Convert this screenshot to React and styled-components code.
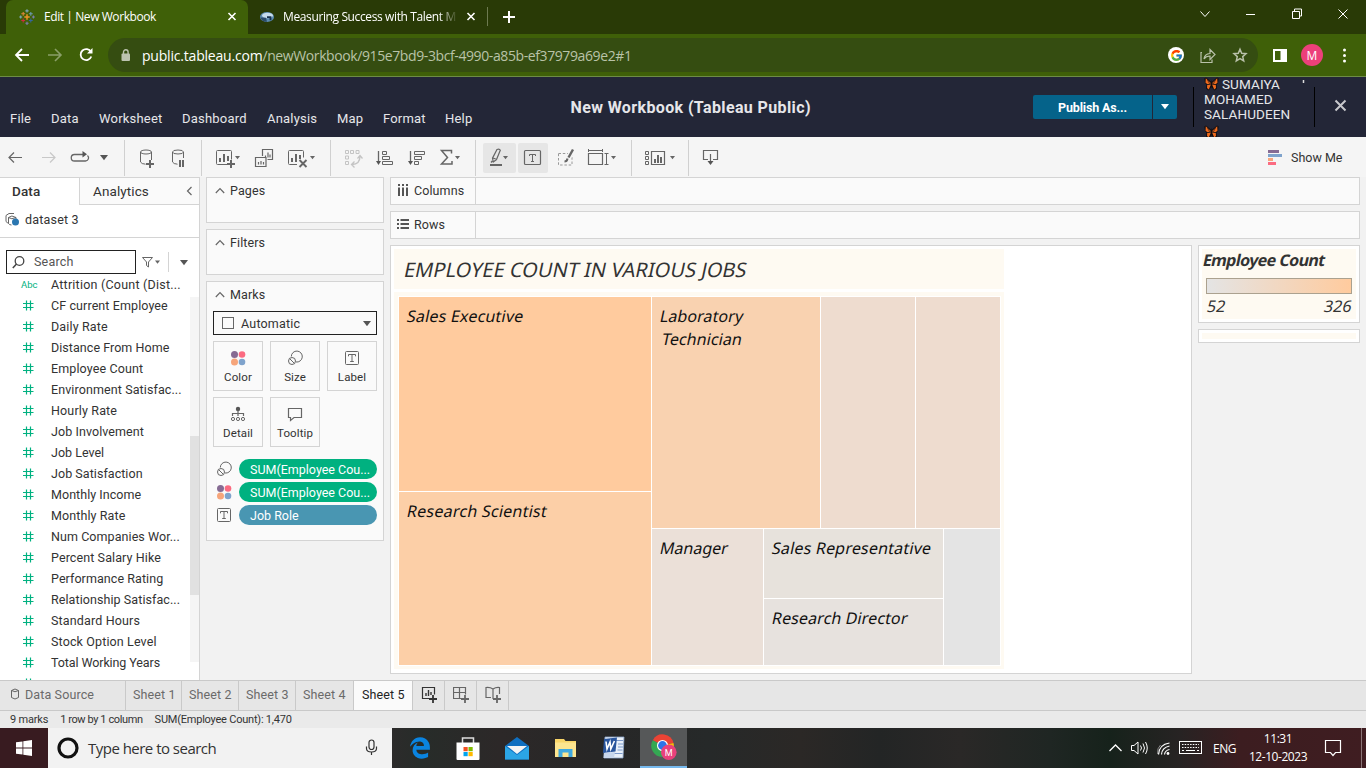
import React from "react";
import styled, { createGlobalStyle } from "styled-components";
import { FcGoogle } from "react-icons/fc";
import { FaEdgeLegacy } from "react-icons/fa";

const Global = createGlobalStyle`
  * { box-sizing: border-box; }
  html, body, #root { margin: 0; width: 1366px; height: 768px; overflow: hidden; }
  body { font-family: Roboto, "Liberation Sans", sans-serif; color: #333; }
  svg { display: block; flex: none; }
`;

const segoe = `"Open Sans", "Noto Sans", sans-serif`;
const chartFont = `"Noto Sans", "Open Sans", sans-serif`;

const Screen = styled.div`
  width: 1366px; height: 768px; display: flex; flex-direction: column; overflow: hidden;
`;
const Txt = styled.span`
  white-space: pre; flex: none;
  margin-left: ${(p) => p.$ml || 0}px;
  font-family: ${(p) => p.$font || "inherit"};
  font-size: ${(p) => p.$size || 12.5}px;
  font-weight: ${(p) => p.$weight || 400};
  letter-spacing: ${(p) => p.$ls || 0}px;
  color: ${(p) => p.$color || "inherit"};
  line-height: ${(p) => p.$lh || "normal"};
`;
/* Slanted text that keeps the upright letter forms. */
const Oblique = styled.span`
  display: block; width: max-content; transform: skewX(-12deg); transform-origin: 0 75%;
  margin-left: ${(p) => p.$ml || 0}px;
`;

/* Glyph: x and y are the icon's origin, w and h its size (1 unit = 1px). */
const Glyph = ({ x, y, w, h, c = "#666", sw = 1, children }) => (
  <svg width={w} height={h} viewBox={`${x} ${y} ${w} ${h}`} fill="none" stroke={c} strokeWidth={sw}>{children}</svg>
);
const Caret = ({ x, y, s = 5, c = "#666" }) => (
  <path d={`M${x} ${y}h${s}l${-s / 2} ${s * 0.65}z`} fill={c} stroke="none" />
);

/* ---------- browser ---------- */
const TabStrip = styled.div`
  height: 34px; background: #293a06; display: flex; color: #fff; flex: none; padding-left: 6px;
`;
const BrowserTab = styled.div`
  width: ${(p) => p.$w}px; height: 34px; display: flex; align-items: center; padding-left: ${(p) => p.$pl}px;
  background: ${(p) => (p.$active ? "#3f6008" : "transparent")};
  border-radius: ${(p) => (p.$active ? "7px 7px 0 0" : "0")};
`;
const TabTitle = styled.span`
  width: ${(p) => p.$w}px; margin-left: ${(p) => p.$ml}px; overflow: hidden; white-space: nowrap; padding-bottom: 2px;
  font: 12px ${segoe}; letter-spacing: ${(p) => p.$ls}px;
  ${(p) => p.$fade && "mask-image: linear-gradient(90deg, #000 90%, rgba(0,0,0,.1) 100%);"}
`;
const WindowButtons = styled.div`margin-left: auto;`;
const AddressRow = styled.div`
  height: 43px; background: #3f6008; border-bottom: 1px solid #6d8c45; display: flex; flex: none; padding-top: 4px;
`;
const Omnibox = styled.div`
  width: 1150px; height: 34px; border-radius: 17px; background: #354d11; display: flex; align-items: center; padding-left: 13px;
`;
const OmniActions = styled.div`
  margin-left: auto; display: flex; align-items: center; padding-right: 10px;
`;
const GoogleDisc = styled.span`
  width: 16px; height: 16px; border-radius: 50%; background: #fff; display: flex; align-items: center; justify-content: center; margin-right: 13px;
`;
const Avatar = styled.span`
  width: 22px; height: 22px; border-radius: 50%; background: #ec407a; color: #fff; display: flex;
  align-items: center; justify-content: center; font: 12px ${segoe}; margin: 6px 0 0 13px;
`;

/* ---------- header ---------- */
const Header = styled.header`
  height: 60px; background: #232637; color: #e6e6ea; display: flex; flex: none;
`;
const Menu = styled.nav`
  width: 570px; display: flex; padding: 33px 0 0 10px; font-size: 13px;
`;
const MenuItem = styled.span`
  width: ${(p) => p.$w}px; flex: none; letter-spacing: 0.2px; line-height: 17px;
`;
const DocTitle = styled.div`
  width: 463px; padding: 21px 0 0 0.5px; line-height: 20px; font-size: 16px; font-weight: 700; letter-spacing: 0.38px; white-space: pre;
`;
const Publish = styled.div`
  display: flex; gap: 1px; margin-top: 18px; height: 24px;
`;
const PublishPart = styled.div`
  width: ${(p) => p.$w}px; background: #05638a; color: #fff; font-weight: 700; font-size: 12.5px; letter-spacing: -0.15px;
  display: flex; align-items: center; justify-content: center;
  border-radius: ${(p) => (p.$last ? "0 2px 2px 0" : "2px 0 0 2px")};
`;
const Rule = styled.i`
  width: 1px; height: 40px; background: #000; margin-top: 10px; margin-left: ${(p) => p.$ml || 0}px; flex: none;
`;
const UserName = styled.div`
  width: 110px; height: 60px; overflow: hidden; margin-left: 10px; font-size: 13.5px; line-height: 15px;
`;
const NameLine = styled.div`
  display: flex; gap: 3px; height: 15px; white-space: pre; letter-spacing: 0.1px; margin-top: ${(p) => p.$mt || 0}px;
`;
const Grow = styled.span`flex: 1;`;

/* ---------- toolbar ---------- */
const Toolbar = styled.div`
  height: 41px; background: #f5f5f5; border-bottom: 1px solid #d4d4d4; display: flex; flex: none; align-items: flex-start;
`;
const Sep = styled.i`width: 1px; height: 36px; margin-top: 3px; background: #d0d0d0; flex: none;`;
const Pressed = styled.span`
  background: #e6e6e6; border-radius: 2px; height: 30px; margin: 6px ${(p) => p.$mr}px 0 0; flex: none;
`;
const ShowMe = styled.div`margin-left: auto; width: 98px; height: 40px; display: flex; align-items: center; gap: 9px;`;

/* ---------- workspace ---------- */
const Workspace = styled.main`
  background: #f2f2f2; display: flex; flex: none; margin-top: -1px; height: 503px;
`;
const DataPane = styled.aside`
  width: 200px; background: #fff; border-right: 1px solid #d4d4d4; border-top: 1px solid #d4d4d4; display: flex; flex-direction: column; overflow: hidden; flex: none;
`;
const PaneTabs = styled.div`display: flex; height: 27px; flex: none;`;
const PaneTab = styled.div`
  flex: ${(p) => (p.$active ? "0 0 79px" : "1")}; padding: 0 0 1px 12px; font-size: 13.5px; display: flex; align-items: center;
  letter-spacing: 0.1px; font-weight: ${(p) => (p.$active ? 500 : 400)};
  ${(p) => !p.$active && "background:#fafafa; border-left:1px solid #d4d4d4; border-bottom:1px solid #d4d4d4; justify-content: space-between; padding: 0 1px 0 13px;"}
`;
const Dataset = styled.div`
  height: 33px; border-bottom: 1px solid #d4d4d4; display: flex; align-items: center; flex: none; padding: 0 0 4px 5px; gap: 6px;
`;
const SearchRow = styled.div`height: 36px; display: flex; padding: 12px 0 0 6px; flex: none;`;
const SearchBox = styled.div`
  width: 130px; height: 24px; border: 1px solid #222; display: flex; align-items: center; gap: 9px; padding: 0 0 1px 5px;
`;
const FieldArea = styled.div`display: flex; flex: 1; min-height: 0;`;
const FieldList = styled.div`width: 190px; overflow: hidden;`;
const Field = styled.div`
  height: 21px; display: flex; align-items: center; font-size: 12.5px; padding-left: 21px;
`;
const FieldIcon = styled.span`width: 30px; color: #00b180; font-size: 9.5px; line-height: 20px;`;
const ScrollTrack = styled.div`width: 9px; height: 365px; margin-top: 23px; background: #f5f5f5; padding-top: 139px;`;
const ScrollThumb = styled.div`height: 159px; background: #e1e1e1;`;

const Shelves = styled.section`width: 178px; margin-left: 6px; display: flex; flex-direction: column; gap: 6px; flex: none;`;
const Card = styled.div`
  height: ${(p) => p.$h}px; border: 1px solid #d4d4d4; background: #fafafa; flex: none;
`;
const CardTitle = styled.div`
  display: flex; align-items: center; gap: 5px; height: 26px; padding: 0 0 2px 8px; font-size: 12.5px; letter-spacing: 0.1px;
`;
const MarkType = styled.div`
  width: 164px; height: 24px; margin: 3px 0 6px 6px; border: 1px solid #222; display: flex; align-items: center; padding-left: 8px; gap: 7px;
`;
const MarkGrid = styled.div`
  display: grid; grid-template-columns: repeat(3, 50px); gap: 6px 7px; margin-left: 6px; margin-bottom: 10.5px;
`;
const MarkButton = styled.div`
  height: 50px; border: 1px solid #d4d4d4; display: flex; flex-direction: column; align-items: center; padding-top: 8px;
  font-size: 11.5px; line-height: 22px; letter-spacing: 0.1px;
`;
const PillRow = styled.div`display: flex; align-items: center; height: 23px; padding-left: 9px; gap: 7px;`;
const Pill = styled.div`
  width: 138px; height: 20px; border-radius: 10px; background: ${(p) => p.$bg}; color: #fff; font-size: 12.5px;
  display: flex; align-items: center; padding-left: 11px; white-space: pre;
`;

const Stage = styled.section`width: 970px; margin-left: 6px; display: flex; flex-direction: column; gap: 6px;`;
const Shelf = styled.div`height: 28px; border: 1px solid #d4d4d4; background: #fafafa; display: flex; flex: none;`;
const ShelfLabel = styled.div`width: 85px; border-right: 1px solid #d4d4d4; display: flex; align-items: center; padding: 0 0 2px 6px; gap: 5px; letter-spacing: 0.1px; font-size: 12.5px;`;
const ViewRow = styled.div`display: flex; gap: 6px; align-items: flex-start;`;
const View = styled.div`width: 802px; height: 429px; border: 1px solid #d4d4d4; background: #fff; padding: 3px; display: flex; flex-direction: column; gap: 3px;`;
const ChartTitle = styled.div`
  width: 610px; height: 40px; background: #fefaf2; padding: 6px 0 0 8.5px; font: 20px/29px ${chartFont}; letter-spacing: 0.03px; color: #333;
`;
const ChartFrame = styled.div`width: 610px; height: 377px; background: #fefaf2; padding: 4px 3px 3px 4px;`;
const TreeMap = styled.div`
  width: 603px; height: 370px; background: #fff; padding: 1px; display: flex; gap: 1px;
`;
const Split = styled.div`
  display: flex; flex-direction: ${(p) => (p.$col ? "column" : "row")}; gap: 1px;
  flex: ${(p) => (p.$size ? `0 0 ${p.$size}px` : "1")}; min-width: 0; min-height: 0;
`;
const Tile = styled.div`
  flex: ${(p) => (p.$size ? `0 0 ${p.$size}px` : "1")}; background: ${(p) => p.$bg}; padding: 8px 0 0 7px; min-height: 0; min-width: 0;
  font: 16px/23px ${chartFont}; letter-spacing: ${(p) => p.$ls ?? 0.2}px; color: #111; white-space: pre;
`;
const Legends = styled.div`display: flex; flex-direction: column; gap: 6px;`;
const Legend = styled.div`width: 162px; height: ${(p) => p.$h}px; border: 1px solid #d4d4d4; background: #fff; padding: 3px;`;
const LegendBody = styled.div`height: 100%; background: #fefaf2; color: #333; font: 16px/22px ${chartFont};`;
const LegendTitle = styled.div`font-weight: 700; letter-spacing: -0.55px; height: 29px; white-space: pre;`;
const Ramp = styled.div`height: 16px; width: 146px; margin-left: 4px; border: 1px solid #aba18f; background: linear-gradient(90deg, #e4e4e4, #ffcb9e);`;
const RampEnds = styled.div`display: flex; justify-content: space-between; padding: 1px 5px 0 4px; letter-spacing: 0.2px;`;

/* ---------- sheet tabs, status ---------- */
const SheetBar = styled.div`height: 31px; background: #e6e6e6; border-top: 1px solid #c9c9c9; border-bottom: 1px solid #c9c9c9; display: flex; flex: none;`;
const SheetTab = styled.div`
  width: ${(p) => p.$w}px; border-right: 1px solid #c9c9c9; display: flex; align-items: center; padding-left: ${(p) => p.$pl ?? 7}px; gap: 5px; padding-bottom: 3px;
  font-size: 12.5px; letter-spacing: 0.12px; white-space: pre;
  color: ${(p) => (p.$active ? "#222" : "#6a6a6a")}; background: ${(p) => (p.$active ? "#fafafa" : "transparent")};
`;
const Status = styled.div`
  height: 17px; background: #eaeaea; display: flex; align-items: center; padding-left: 10px; gap: 12px; flex: none;
`;

/* ---------- taskbar ---------- */
const Taskbar = styled.footer`
  height: 40px; display: flex; flex: none; color: #fff;
  background: linear-gradient(90deg, #381b20 0, #381b20 48px, #2c2b2b 392px, #272c29 420px, #2c2828 500px, #272727 600px, #262929 710px, #2b2826 800px, #232525 880px, #2a2827 960px, #1f2623 1050px, #16221b 1110px, #272323 1180px, #3c1d20 1240px, #3f1d21 1366px);
`;
const TaskSearch = styled.div`width: 344px; background: #f2f2f2; display: flex; align-items: center; padding-left: 8px;`;
const TaskApp = styled.div`
  width: ${(p) => p.$w || 49}px; display: flex; align-items: center; justify-content: center;
  ${(p) => p.$active && "background: #565859; border-bottom: 2px solid #76b9ed;"}
`;
const Tray = styled.div`margin-left: auto; display: flex; align-items: center;`;
const Lang = styled.span`font: 12px ${segoe}; letter-spacing: -0.5px; width: 23px; margin-left: 8px;`;
const Clock = styled.div`width: 84px; display: flex; flex-direction: column; align-items: center; font: 12px/18px ${segoe}; letter-spacing: -0.45px; padding-bottom: 1px;`;

const Close = ({ x, y, r = 4, sw = 1.4 }) => <path d={`M${x - r} ${y - r}l${2 * r} ${2 * r}m0 ${-2 * r}l${-2 * r} ${2 * r}`} strokeWidth={sw} />;

const crosses = [
  [8, 8, 2.7, "#eb9129"], [4.2, 4.8, 1.9, "#e0863a"], [11.8, 4.8, 1.9, "#6b9ab0"], [4.2, 11.5, 1.9, "#d02a3c"], [11.8, 11.5, 1.9, "#3565a0"],
  [8, 1.9, 1.6, "#7fa8bb"], [8, 14.3, 1.6, "#7b7fae"], [1.7, 8, 1.5, "#7fa8bb"], [14.4, 8, 1.5, "#7b7fae"],
];

const Monarch = () => (
  <svg width="15" height="14" viewBox="0 0 15 14">
    <path d="M7.500 5L2 .5.3 1.500 1 6l1.500 1.500L2 11.500 4.500 13.500 7.500 10l3 3.500 2.500-2-.5-4L14 6l.7-4.500L13 .5z" fill="#100d12" />
    <path d="M7 6.200L1.800 1.300 1.500 5.800 3.500 7.300zM8 6.200L13.200 1.300l.3 4.500-2 1.500zM6.900 7.500L3.200 8.100 3 11l1.800 1.500zM8.100 7.500l3.700.6.2 2.900-1.800 1.500z" fill="#ee6a1e" />
    <path d="M7.500 3.500v7M3.500 3l2 3.500M11.500 3l-2 3.500" stroke="#100d12" strokeWidth=".6" />
  </svg>
);

const Dots4 = ({ x, y }) => (
  <g stroke="none">
    <circle cx={x + 3.5} cy={y + 3.5} r="3.5" fill="#866b93" /><circle cx={x + 11} cy={y + 3.5} r="3.3" fill="#fb6b81" />
    <circle cx={x + 3.5} cy={y + 11} r="3.5" fill="#f6a57b" /><circle cx={x + 11} cy={y + 11} r="3.3" fill="#7fa3cc" />
  </g>
);
const SizeGlyph = () => (
  <Glyph x={0} y={0} w={16} h={16}><path d="M4.300 6.500A5.500 5.500 0 1 1 9 12" /><circle cx="5" cy="11" r="3.500" /><path d="M2.700 8.700l4.600 4.600" /></Glyph>
);
const TextGlyph = () => (
  <Glyph x={0} y={0} w={16} h={16} sw={1}><rect x="1.500" y="1.500" width="13" height="13" rx="1" /><path d="M4.500 6.300V4.500h7v1.800M8 4.500v7M6.200 11.500h3.600" /></Glyph>
);
const ColorGlyph = () => <Glyph x={0} y={0} w={16} h={16}><Dots4 x={1} y={1} /></Glyph>;
const DetailGlyph = () => (
  <Glyph x={0} y={0} w={16} h={16}>
    <circle cx="8" cy="3" r="2.200" fill="#555" stroke="none" /><path d="M8 4v6M2.500 10V7.500h11V10" strokeWidth="1.200" />
    <circle cx="3" cy="13" r="1.600" /><circle cx="8" cy="13" r="1.600" /><circle cx="13" cy="13" r="1.600" />
  </Glyph>
);
const TooltipGlyph = () => <Glyph x={0} y={0} w={16} h={16}><path d="M1.500 2.500h13v9H7l-3.500 3v-3h-2z" strokeWidth="1.200" /></Glyph>;
const Chevron = () => <Glyph x={0} y={0} w={10} h={8} sw={1.2}><path d="M.8 7L5 2.700l4.200 4.300" /></Glyph>;
const HashGlyph = () => <Glyph x={0} y={0} w={13} h={12} c="#00b180" sw={1.200}><path d="M5.500 .5v10M9.500 .5v10M2 3.500h10.500M2 7.500h10.500" /></Glyph>;

const fields = [
  ["Attrition (Count (Dist...", 0.22], ["CF current Employee", 0.1], ["Daily Rate", 0.15], ["Distance From Home", 0.05], ["Employee Count", 0.12],
  ["Environment Satisfac...", 0.1], ["Hourly Rate", 0.15], ["Job Involvement", 0.08], ["Job Level", 0], ["Job Satisfaction", 0.05], ["Monthly Income", 0.05],
  ["Monthly Rate", 0.1], ["Num Companies Wor...", 0.07], ["Percent Salary Hike", 0.1], ["Performance Rating", 0.07], ["Relationship Satisfac...", 0.08],
  ["Standard Hours", 0.15], ["Stock Option Level", 0.13], ["Total Working Years", -0.1], ["", 0],
];
const menus = [["File", 41], ["Data", 48], ["Worksheet", 83], ["Dashboard", 85], ["Analysis", 70], ["Map", 46], ["Format", 62], ["Help", 40]];

const Browser = () => (
  <>
    <TabStrip>
      <BrowserTab $active $w={242} $pl={13}>
        <svg width="16" height="16" viewBox="0 0 16 16">
          {crosses.map(([x, y, r, c], i) => (
            <path key={i} d={`M${x - r} ${y}h${2 * r}M${x} ${y - r}v${2 * r}`} stroke={c} strokeWidth={i ? 1.1 : 1.5} />
          ))}
        </svg>
        <TabTitle $w={181} $ml={9} $ls={-0.42}>Edit | New Workbook</TabTitle>
        <Glyph x={0} y={0} w={14} h={14} c="#fff"><Close x={7} y={6.500} r={3.500} sw={1.600} /></Glyph>
      </BrowserTab>
      <BrowserTab $w={239} $pl={11}>
        <svg width="17" height="16" viewBox="0 0 17 16">
          <ellipse cx="8" cy="8" rx="7" ry="5" fill="#5c8cb0" /><ellipse cx="8.500" cy="6.500" rx="5.500" ry="2.800" fill="#c5dcec" />
          <path d="M1.500 8.500Q3 13 8 12.800l-1-4z" fill="#2c4c69" /><path d="M8 8.200h3.500v3" stroke="#16324d" strokeWidth="1.800" fill="none" />
        </svg>
        <TabTitle $w={173} $ml={7} $ls={-0.38} $fade>Measuring Success with Talent M</TabTitle>
        <Glyph x={0} y={0} w={22} h={14} c="#fff"><Close x={15} y={6.500} r={3.500} sw={1.600} /></Glyph>
      </BrowserTab>
      <Glyph x={487} y={0} w={36} h={34} c="#fff"><path d="M487.500 7v19" stroke="#6d7a50" strokeWidth="1" /><path d="M503 17h12M509 11v12" strokeWidth="2" /></Glyph>
      <WindowButtons>
        <Glyph x={1190} y={0} w={176} h={34} c="#fff">
          <path d="M1200.500 11.500l4.500 5 4.500-5M1246 14.500h9M1292.500 11.500h7v7h-7zM1294.500 11v-2h7v7h-2M1338.500 9.500l9 9m0-9l-9 9" />
        </Glyph>
      </WindowButtons>
    </TabStrip>
    <AddressRow>
      <Glyph x={0} y={38} w={108} h={34} c="#fff" sw={1.8}>
        <path d="M29 55H16m6-6l-6 6 6 6" /><path d="M48 55h13m-6-6l6 6-6 6" stroke="#8a9f68" strokeWidth="1.600" />
        <path d="M91 52a5.500 5.500 0 1 0 .3 4.500" /><path d="M92.500 48v5.500h-5.500z" fill="#fff" stroke="none" />
      </Glyph>
      <Omnibox>
        <svg width="10" height="13" viewBox="0 0 10 13"><rect x=".5" y="4.500" width="8.500" height="7.500" rx="1" fill="#bcc3b0" /><path d="M2.500 5V3a2.300 2.300 0 0 1 4.600 0v2" fill="none" stroke="#bcc3b0" strokeWidth="1.400" /></svg>
        <Txt $font={segoe} $size={14} $color="#fff" $ls={-0.2} $ml={11}>public.tableau.com</Txt>
        <Txt $font={segoe} $size={14} $color="#b9c3a8" $ls={-0.4}>/newWorkbook/915e7bd9-3bcf-4990-a85b-ef37979a69e2#1</Txt>
        <OmniActions>
          <GoogleDisc><FcGoogle size={13} /></GoogleDisc>
          <Glyph x={1197} y={38} w={51} h={34} c="#b9c1aa" sw={1.200}>
            <path d="M1202 52.500h-1v10h11v-3M1204 59q.5-5 6-5.500v-4l5 5-5 5v-3.500q-4 0-6 3z" />
            <path d="M1240 49.200l1.700 4.100 4.300.4-3.300 2.900 1 4.300-3.700-2.300-3.700 2.300 1-4.300-3.300-2.900 4.300-.4z" strokeWidth="1.500" />
          </Glyph>
        </OmniActions>
      </Omnibox>
      <Glyph x={1258} y={38} w={30} h={34} c="#fff" sw={2}><rect x="1274" y="50" width="12" height="11" /><path d="M1283 49v12" strokeWidth="5" /></Glyph>
      <Avatar>M</Avatar>
      <Glyph x={1323} y={38} w={40} h={34}><g fill="#fff" stroke="none"><circle cx="1344.500" cy="50" r="1.500" /><circle cx="1344.500" cy="55.500" r="1.500" /><circle cx="1344.500" cy="61" r="1.500" /></g></Glyph>
    </AddressRow>
  </>
);

const AppHeader = () => (
  <Header>
    <Menu>{menus.map(([m, w]) => <MenuItem key={m} $w={w}>{m}</MenuItem>)}</Menu>
    <DocTitle>New Workbook (Tableau Public)</DocTitle>
    <Publish>
      <PublishPart $w={119}>Publish As...</PublishPart>
      <PublishPart $w={24} $last><Glyph x={0} y={0} w={8} h={6}><Caret x={0} y={0} s={8} c="#fff" /></Glyph></PublishPart>
    </Publish>
    <Rule $ml={16} />
    <UserName>
      <NameLine><Monarch />SUMAIYA<Grow /><Glyph x={0} y={0} w={12} h={8} c="#ddd" sw={1.5}><path d="M1.500 3v3" /></Glyph></NameLine>
      <NameLine>MOHAMED</NameLine>
      <NameLine>SALAHUDEEN</NameLine>
      <NameLine $mt={3}><Monarch /></NameLine>
    </UserName>
    <Rule />
    <Glyph x={1315} y={77} w={50} h={60} c="#c8c8cc"><Close x={1340.500} y={105.500} r={5} sw={2} /></Glyph>
  </Header>
);

const ToolRow = () => (
  <Toolbar>
    <Glyph x={0} y={137} w={124} h={40} sw={1.200}>
      <path d="M22 157.500H9m5-5l-5 5 5 5" /><path d="M42 157.500h13m-5-5l5 5-5 5" stroke="#c8c8c8" />
      <path d="M84 154.500h-9.500a3.200 3.200 0 0 0 0 6.500h11a3.200 3.200 0 0 0 2-5.600" strokeWidth="1.300" /><path d="M82.500 151l4.500 3.300-4.500 3.300z" fill="#555" stroke="none" />
      <Caret x={100} y={155} s={8} c="#555" />
    </Glyph>
    <Sep />
    <Glyph x={125} y={137} w={76} h={40}>
      <path d="M140.500 152v10q1 2 5 2.200M151.500 152v8M140.500 152a5.500 2 0 0 1 11 0 5.500 2 0 0 1-11 0" /><path d="M146 164h8M150 160v8" strokeWidth="2" />
      <path d="M172.500 152v10q1 2 5 2.200M183.500 152v6M172.500 152a5.500 2 0 0 1 11 0 5.500 2 0 0 1-11 0" /><path d="M180 160v7M183 160v7" strokeWidth="2" />
    </Glyph>
    <Sep />
    <Glyph x={202} y={137} w={128} h={40}>
      <path d="M227 164.500h-9.500q-1 0-1-1v-12q0-1 1-1h13q1 0 1 1v8" /><path d="M220 158v4M224 154v8M228 156v5" strokeWidth="2" /><path d="M227 164h8M231 160v8" strokeWidth="2" />
      <Caret x={235} y={156} />
      <path d="M262.500 156v-6.500h10v10h-5M255.500 157.500h10.500v9h-10.500zM258.500 162v2.500M261 161v3.500M263.500 162v2.500M265.500 155.500v2M268 152.500v5M270 154.500v3" strokeWidth="1.200" />
      <path d="M297 164.500h-7.500q-1 0-1-1v-12q0-1 1-1h13q1 0 1 1v6" /><path d="M292 158v4M296 154v8M300 155v4" strokeWidth="2" /><path d="M299.500 160l7 7m0-7l-7 7" strokeWidth="1.900" />
      <Caret x={310} y={156} />
    </Glyph>
    <Sep />
    <Glyph x={331} y={137} w={144} h={40}>
      <g stroke="#c4c4c4"><path d="M345.500 150.500h3v3h-3zM350.500 150.500h3v3h-3zM356 150.500h3v3h-3zM345.500 156h3v3h-3zM345.500 161.500h3v3h-3z" /><path d="M352 164.500q8 0 8-8.500M354.500 161.500l-3 3 3 3M357.500 158.500l2.500-3 2.500 3" strokeWidth="1.300" /></g>
      <path d="M378.500 151v12" strokeWidth="1.300" /><path d="M376 161h5l-2.500 4z" fill="#555" stroke="none" /><path d="M382.500 151.500h4v3h-4zM382.500 156.500h7v3h-7zM382.500 161.500h10v3h-10z" />
      <path d="M410.500 151v12" strokeWidth="1.300" /><path d="M408 161h5l-2.500 4z" fill="#555" stroke="none" /><path d="M414.500 151.500h10v3h-10zM414.500 156.500h7v3h-7zM414.500 161.500h4v3h-4z" />
      <path d="M451.500 153.500v-3h-10l6 7-6 6.500h10.500v-3" strokeWidth="1.500" /><Caret x={455} y={156} />
    </Glyph>
    <Sep />
    <Glyph x={476} y={137} w={7} h={40} />
    <Pressed $mr={2}>
      <Glyph x={483} y={143} w={33} h={30}><path d="M490 165h12" strokeWidth="2" /><path d="M497 149.500q2.500-1 3.300.8l-3.800 9.200-3.200 2.500-.8-3.800zM493 158l3.800 1.500M492.300 161l-1.300 1.500" strokeWidth="1.200" /><Caret x={503} y={156} /></Glyph>
    </Pressed>
    <Pressed $mr={0}>
      <Glyph x={518} y={143} w={30} h={30}><rect x="524.500" y="150.500" width="16" height="14" rx="1" strokeWidth="1.200" /><path d="M529.500 156v-1.500h6v1.500M532.500 154.500v7M531 161.500h3" /></Glyph>
    </Pressed>
    <Glyph x={548} y={137} w={83} h={40}>
      <rect x="558.500" y="153.500" width="13.500" height="11.500" strokeDasharray="2.500 1.800" stroke="#999" /><path d="M567.500 159.500l5.500-10" stroke="#f5f5f5" strokeWidth="5" /><path d="M568.500 157.500l4.500-8" strokeWidth="2.400" /><path d="M564.500 161.500q2.500 0 3-3" strokeWidth="2" />
      <path d="M588.500 153.500h14v11h-14z" strokeWidth="1.200" /><path d="M588.500 149v3M602.500 149v3M588.500 150.500h14M604.500 153.500h4M604.500 164.500h4M606.500 153.500v11" /><Caret x={611} y={156} />
    </Glyph>
    <Sep />
    <Glyph x={632} y={137} w={56} h={40}>
      <path d="M651.500 151.500h13v13h-13z" strokeWidth="1.200" /><path d="M645.500 151.500h3v3h-3zM645.500 156.500h3v3h-3zM645.500 161.500h3v3h-3z" /><path d="M655 159v4M658 155v8M661 157v6" strokeWidth="2" /><Caret x={670} y={156} />
    </Glyph>
    <Sep />
    <Glyph x={689} y={137} w={40} h={40}><path d="M708 159.500h-4.500v-9h14v9h-4.500M710.500 154v8" strokeWidth="1.200" /><path d="M707.500 161h6l-3 4z" fill="#555" stroke="none" /></Glyph>
    <ShowMe>
      <Glyph x={0} y={0} w={14} h={15}><path d="M0 1.500h11" stroke="#866b93" strokeWidth="3" /><path d="M0 5.500h14" stroke="#7fa3cc" strokeWidth="3" /><path d="M0 9.500h5" stroke="#f6a57b" strokeWidth="3" /><path d="M0 13.500h8" stroke="#fb6b81" strokeWidth="3" /></Glyph>
      <Txt>Show Me</Txt>
    </ShowMe>
  </Toolbar>
);

const Left = () => (
  <DataPane>
    <PaneTabs>
      <PaneTab $active>Data</PaneTab>
      <PaneTab>Analytics<Glyph x={0} y={0} w={14} h={10} sw={1.200}><path d="M7.500 1L3.500 5l4 4" /></Glyph></PaneTab>
    </PaneTabs>
    <Dataset>
      <Glyph x={0} y={0} w={14} h={14}><path d="M1 3.500q2-3 8-2M1 3.500v6q1 1.500 3 1.500M3.500 5.500v6q1 1.500 3 1.500M3.500 5.500q3-3 7.500 0M3.500 5.500q3 2.500 7.500 0v2" /><circle cx="10.500" cy="10" r="3.500" fill="#2a76b0" stroke="none" /></Glyph>
      <Txt $ls={0.2}>dataset 3</Txt>
    </Dataset>
    <SearchRow>
      <SearchBox>
        <Glyph x={0} y={0} w={13} h={14} c="#444"><circle cx="7.500" cy="6" r="4.300" strokeWidth="1.300" /><path d="M4.500 9L.8 13" strokeWidth="1.500" /></Glyph>
        <Txt $color="#555" $ls={0.2}>Search</Txt>
      </SearchBox>
      <Glyph x={136} y={250} w={60} h={24}>
        <path d="M142.500 257.500h10l-4 4.500v5l-2-1.500v-3.500z" /><Caret x={155} y={260.500} s={5} /><path d="M168.500 252v20" stroke="#d4d4d4" /><Caret x={180} y={260} s={8} c="#555" />
      </Glyph>
    </SearchRow>
    <FieldArea>
      <FieldList>
        {fields.map(([name, ls], i) => (
          <Field key={i}>
            <FieldIcon>{i === 0 ? "Abc" : <HashGlyph />}</FieldIcon>
            <Txt $ls={ls}>{name}</Txt>
          </Field>
        ))}
      </FieldList>
      <ScrollTrack><ScrollThumb /></ScrollTrack>
    </FieldArea>
  </DataPane>
);

const Middle = () => (
  <Shelves>
    <Card $h={46}><CardTitle><Chevron />Pages</CardTitle></Card>
    <Card $h={46}><CardTitle><Chevron />Filters</CardTitle></Card>
    <Card $h={260}>
      <CardTitle><Chevron />Marks</CardTitle>
      <MarkType>
        <Glyph x={0} y={0} w={12} h={12}><rect x=".5" y=".5" width="11" height="11" /></Glyph>
        <Txt $ls={0.2}>Automatic</Txt><Grow />
        <Glyph x={0} y={0} w={13} h={5}><Caret x={0} y={0} s={8} c="#555" /></Glyph>
      </MarkType>
      <MarkGrid>
        <MarkButton><ColorGlyph />Color</MarkButton>
        <MarkButton><SizeGlyph />Size</MarkButton>
        <MarkButton><TextGlyph />Label</MarkButton>
        <MarkButton><DetailGlyph />Detail</MarkButton>
        <MarkButton><TooltipGlyph />Tooltip</MarkButton>
      </MarkGrid>
      <PillRow><SizeGlyph /><Pill $bg="#00b180">SUM(Employee Cou...</Pill></PillRow>
      <PillRow><ColorGlyph /><Pill $bg="#00b180">SUM(Employee Cou...</Pill></PillRow>
      <PillRow><TextGlyph /><Pill $bg="#4996b2">Job Role</Pill></PillRow>
    </Card>
  </Shelves>
);

const Right = () => (
  <Stage>
    <Shelf><ShelfLabel><Glyph x={0} y={0} w={12} h={12} c="#555"><path d="M2 0v2M6 0v2M10 0v2M2 3.500V12M6 3.500V12M10 3.500V12" strokeWidth="2" /></Glyph>Columns</ShelfLabel></Shelf>
    <Shelf><ShelfLabel><Glyph x={0} y={0} w={12} h={12} c="#555"><path d="M0 2h2M0 6h2M0 10h2M3.500 2H12M3.500 6H12M3.500 10H12" strokeWidth="2" /></Glyph>Rows</ShelfLabel></Shelf>
    <ViewRow>
      <View>
        <ChartTitle><Oblique>EMPLOYEE COUNT IN VARIOUS JOBS</Oblique></ChartTitle>
        <ChartFrame>
          <TreeMap>
            <Split $col $size={252}>
              <Tile $size={194} $bg="#ffcb9e"><Oblique>Sales Executive</Oblique></Tile>
              <Tile $bg="#fccfa7" $ls={0.25}><Oblique>Research Scientist</Oblique></Tile>
            </Split>
            <Split $col>
              <Split $size={231}>
                <Tile $size={168} $bg="#f9d2b0" $ls={0.08}><Oblique>Laboratory</Oblique><Oblique $ml={2}>Technician</Oblique></Tile>
                <Tile $size={94} $bg="#eedccf" />
                <Tile $bg="#eedccf" />
              </Split>
              <Split>
                <Tile $size={111} $bg="#ebe0d8" $ls={0}><Oblique>Manager</Oblique></Tile>
                <Split $col $size={179}>
                  <Tile $size={69} $bg="#e7e2dc"><Oblique>Sales Representative</Oblique></Tile>
                  <Tile $bg="#e7e2de" $ls={0.12}><Oblique>Research Director</Oblique></Tile>
                </Split>
                <Tile $bg="#e4e4e4" />
              </Split>
            </Split>
          </TreeMap>
        </ChartFrame>
      </View>
      <Legends>
        <Legend $h={78}>
          <LegendBody>
            <LegendTitle><Oblique>Employee Count</Oblique></LegendTitle>
            <Ramp />
            <RampEnds><Oblique>52</Oblique><Oblique>326</Oblique></RampEnds>
          </LegendBody>
        </Legend>
        <Legend $h={14}><LegendBody /></Legend>
      </Legends>
    </ViewRow>
  </Stage>
);

const Bottom = () => (
  <>
    <SheetBar>
      <SheetTab $w={126} $pl={10}><Glyph x={0} y={0} w={10} h={12}><path d="M1.500 2.500v7q3.500 3 7 0v-7M1.500 2.500q3.500-3 7 0q-3.500 2.500-7 0" /></Glyph>Data Source</SheetTab>
      <SheetTab $w={56}>Sheet 1</SheetTab>
      <SheetTab $w={57}>Sheet 2</SheetTab>
      <SheetTab $w={57}>Sheet 3</SheetTab>
      <SheetTab $w={58}>Sheet 4</SheetTab>
      <SheetTab $w={59} $pl={8} $active>Sheet 5</SheetTab>
      <SheetTab $w={32} $pl={8}><Glyph x={421} y={686} w={18} h={17} c="#333"><path d="M430 698.500h-7.500v-11h12v7" strokeWidth="1.200" /><path d="M426 693v3M428.500 690v6M431 692v3" strokeWidth="1.400" /><path d="M429 699h8M433 695v8" strokeWidth="1.800" /></Glyph></SheetTab>
      <SheetTab $w={32} $pl={8}><Glyph x={453} y={686} w={18} h={17}><path d="M461 698.500h-7.500v-11h12v7M453.500 692.500h12M459.500 687.500v11" strokeWidth="1.200" /><path d="M461 699h8M465 695v8" strokeWidth="1.800" /></Glyph></SheetTab>
      <SheetTab $w={32} $pl={8}><Glyph x={485} y={686} w={18} h={17}><path d="M493 699v-10q-3-2-7-1.500v10h5M493 689q3-2 6.500-1.500v6.500M493 689v9" strokeWidth="1.200" /><path d="M493 699h8M497 695v8" strokeWidth="1.800" /></Glyph></SheetTab>
    </SheetBar>
    <Status>
      <Txt $size={11} $ls={-0.2}>9 marks</Txt><Txt $size={11} $ls={-0.4}>1 row by 1 column</Txt><Txt $size={11} $ls={-0.22}>SUM(Employee Count): 1,470</Txt>
    </Status>
    <Taskbar>
      <TaskApp $w={48}><svg width="16" height="16" viewBox="0 0 16 16" fill="#fff"><path d="M0 2.300l6.500-.9v6.100H0zM7.300 1.300L16 0v7.500H7.300zM0 8.400h6.500v6.200L0 13.700zM7.300 8.400H16V16l-8.700-1.300z" /></svg></TaskApp>
      <TaskSearch>
        <Glyph x={0} y={0} w={24} h={24} c="#111"><circle cx="12" cy="12" r="9" strokeWidth="3.200" /></Glyph>
        <Txt $font={segoe} $size={15} $color="#333" $ls={-0.52} $ml={8}>Type here to search</Txt><Grow />
        <Glyph x={0} y={0} w={27} h={20} c="#333"><rect x="4" y="2" width="5" height="9.500" rx="2.500" strokeWidth="1.200" /><path d="M1.500 8.500v2q0 3.500 5 3.500t5-3.500v-2M6.500 14v3" strokeWidth="1.200" /></Glyph>
      </TaskSearch>
      <TaskApp $w={55}><FaEdgeLegacy size={22} color="#0a84e0" /></TaskApp>
      <TaskApp $w={41}><svg width="24" height="25" viewBox="0 0 24 25"><path d="M6.500 7V2h11v5" fill="none" stroke="#ddd" strokeWidth="1.500" /><path d="M.5 6.500h23V23q0 1-1 1h-21q-1 0-1-1z" fill="#fff" /><path d="M7.500 11h4.200v4.200H7.500z" fill="#f25022" /><path d="M12.500 11h4.200v4.200h-4.200z" fill="#7fba00" /><path d="M7.500 16h4.200v4.200H7.500z" fill="#00a4ef" /><path d="M12.500 16h4.200v4.200h-4.200z" fill="#ffb900" /></svg></TaskApp>
      <TaskApp $w={57}><svg width="24" height="23" viewBox="0 0 24 23"><path d="M0 9l12-9 12 9v13.500H0z" fill="#0f6fc0" /><path d="M2 9h20l-10 8z" fill="#f4f4f4" /><path d="M0 9l12 9 12-9v13.500H0z" fill="#2ba5e6" /></svg></TaskApp>
      <TaskApp $w={42}><svg width="22" height="20" viewBox="0 0 22 20"><path d="M0 1h9l1.500 2H21v16H0z" fill="#f9d568" /><path d="M0 4.500h21V19H0z" fill="#fde58f" /><path d="M3.500 19v-8h14v8h-4v-4.500h-6V19z" fill="#3fa9e0" /></svg></TaskApp>
      <TaskApp $w={53}><svg width="23" height="24" viewBox="0 0 23 24"><path d="M3 1h19l-1 21H2z" fill="#e9f0f9" stroke="#8aa3c8" strokeWidth=".8" /><path d="M14 4.500h7M16 8h5M16 11h5M15.500 14h5M12 17.500h8.500" stroke="#7d9acb" strokeWidth="1.200" /><path d="M2 3l13-1.500-1.500 14L1 17z" fill="#2a569d" /><path d="M4 5.500l1 7.500 3-7 .8 7 3.600-8" fill="none" stroke="#fff" strokeWidth="1.600" /><path d="M2 17l11-1-1 6H1.500z" fill="#c8d7ec" /></svg></TaskApp>
      <TaskApp $w={47} $active>
        <svg width="26" height="27" viewBox="0 0 26 27">
          <path d="M11.500 11.500L1.800 6.200A11.200 11.200 0 0 1 22.500 9z" fill="#ea4335" /><path d="M11.500 11.500l11-2.500a11.200 11.200 0 0 1-11 14z" fill="#fbbc05" /><path d="M11.500 11.500l1 11.500A11.200 11.200 0 0 1 1.800 6.200z" fill="#34a853" />
          <circle cx="11.500" cy="11.500" r="5.500" fill="#fff" /><circle cx="11.500" cy="11.500" r="4.400" fill="#2e74e8" />
          <circle cx="17.800" cy="18.300" r="7.800" fill="#e9417c" /><text x="17.800" y="21.500" fontSize="9" fontFamily="Roboto, sans-serif" textAnchor="middle" fill="#fff">M</text>
        </svg>
      </TaskApp>
      <Tray>
        <Glyph x={1105} y={728} w={100} h={40} c="#fff">
          <path d="M1109.500 751l6-6 6 6" strokeWidth="1.300" /><path d="M1131.500 745.500h2.500l4-3.500v12l-4-3.500h-2.500zM1140.500 745.500q2 2.500 0 5M1143 743.500q3 4.500 0 9M1145.500 742q3.500 6 0 12" />
          <path d="M1158.500 754.500q.5-10 11-11.500M1161.500 754.500q.5-7 8-8.500M1164.500 754.500q.5-4 5-5" strokeWidth="1.200" /><circle cx="1168" cy="753.500" r="1.400" fill="#fff" stroke="none" /><path d="M1157.500 754q-.5-6 3-9" stroke="#888" />
          <rect x="1179.500" y="741.500" width="22" height="12" /><path d="M1182 744.500h17M1182 747.500h17" strokeDasharray="1.500 1.200" strokeWidth="1.200" /><path d="M1182 750.500h2M1186 750.500h9M1197 750.500h2" />
        </Glyph>
        <Lang>ENG</Lang>
        <Clock><span>11:31</span><span>12-10-2023</span></Clock>
        <Glyph x={1320} y={728} w={46} h={40} c="#fff"><path d="M1325.500 740.500h15v12h-5l-2.500 3-2.500-3h-5z" strokeWidth="1.200" /><path d="M1361.500 728v40" stroke="#8a7476" /></Glyph>
      </Tray>
    </Taskbar>
  </>
);

export default function App() {
  return (
    <Screen>
      <Global />
      <Browser />
      <AppHeader />
      <ToolRow />
      <Workspace><Left /><Middle /><Right /></Workspace>
      <Bottom />
    </Screen>
  );
}
